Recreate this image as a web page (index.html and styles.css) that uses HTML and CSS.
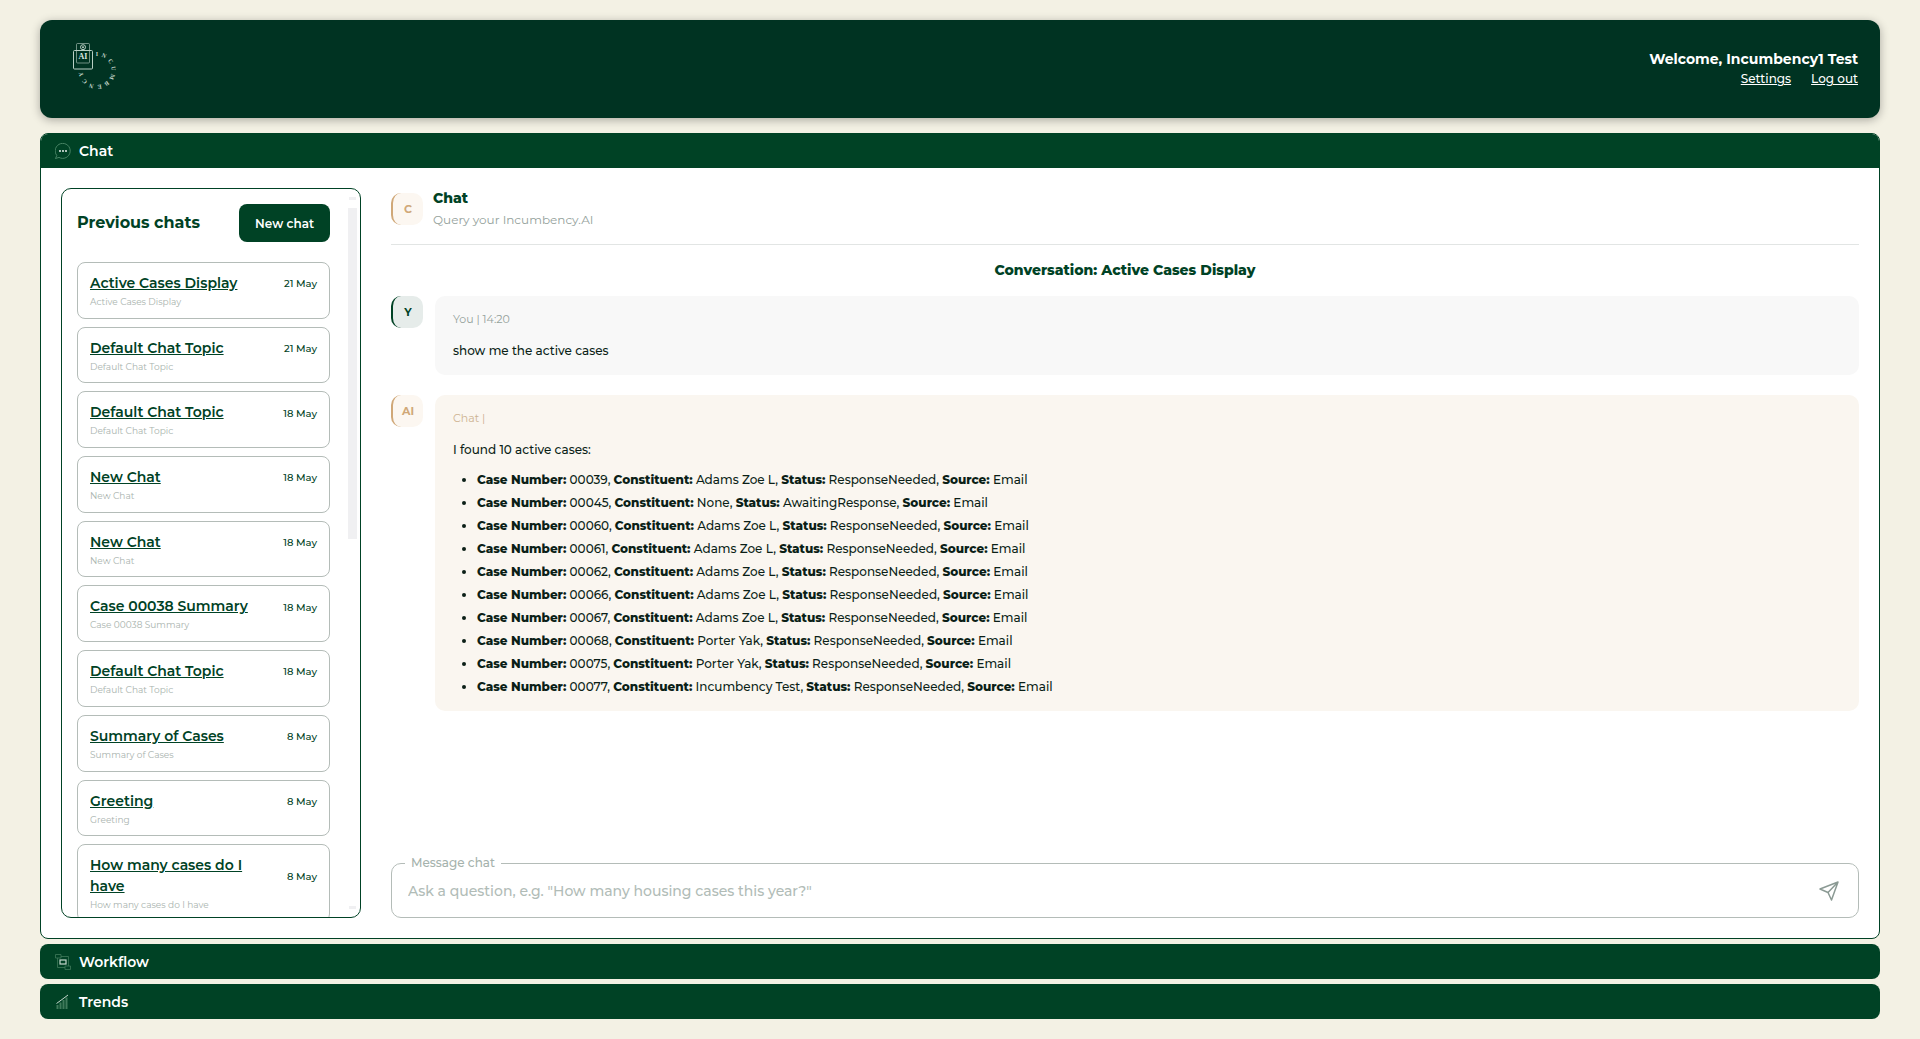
FILE: index.html
```
<!DOCTYPE html>
<html lang="en">
<head>
    <meta charset="UTF-8">
    <meta name="viewport" content="width=device-width, initial-scale=1.0">
    <title>Incumbency.AI</title>
    <link rel="stylesheet" href="styles.css">
</head>
<body>

<header class="header">
    <a href="#" class="logo" aria-label="Incumbency AI">
        <svg width="46" height="52" viewBox="0 0 46 52" fill="none" stroke="#b9cfc4">
            <rect x="4.500" y="0.500" width="13" height="19.500" rx="1" stroke-opacity="0.600"/>
            <circle cx="11" cy="4.200" r="2.500"/>
            <circle cx="11" cy="4.200" r="1" fill="#b9cfc4" stroke="none"/>
            <rect x="1.500" y="7.500" width="19" height="18.500" rx="1"/>
            <text x="11" y="16" class="logo-ai">AI</text>
            <g class="logo-ring">
                <text x="25" y="13" transform="rotate(0 25 27.500)">I</text>
                <text x="25" y="13" transform="rotate(25 25 27.500)">N</text>
                <text x="25" y="13" transform="rotate(56 25 27.500)">C</text>
                <text x="25" y="13" transform="rotate(83 25 27.500)">U</text>
                <text x="25" y="13" transform="rotate(113 25 27.500)">M</text>
                <text x="25" y="13" transform="rotate(143 25 27.500)">B</text>
                <text x="25" y="13" transform="rotate(171 25 27.500)">E</text>
                <text x="25" y="13" transform="rotate(200 25 27.500)">N</text>
                <text x="25" y="13" transform="rotate(229 25 27.500)">C</text>
                <text x="25" y="13" transform="rotate(256 25 27.500)">Y</text>
            </g>
        </svg>
    </a>
    <div class="user">
        <div class="welcome">Welcome, Incumbency1 Test</div>
        <nav class="user-links">
            <a href="#">Settings</a>
            <a href="#">Log out</a>
        </nav>
    </div>
</header>

<main class="sections">

    <!-- Chat -->
    <section class="panel panel-open">
        <button type="button" class="panel-header" aria-expanded="true">
            <svg class="panel-icon" viewBox="0 0 16 16" fill="none">
                <path d="M0.500 15.500 L1.800 12.500 A7.500 7.500 0 1 1 4 14.400 Z" stroke="#4f8a6b" stroke-width="0.900" stroke-linejoin="round"/>
                <g fill="#ffffff"><circle cx="5" cy="8" r="0.900"/><circle cx="8" cy="8" r="0.900"/><circle cx="11" cy="8" r="0.900"/></g>
            </svg>
            Chat
        </button>

        <div class="panel-body">
            <aside class="previous">
                <div class="previous-list">
                    <div class="previous-top">
                        <h2>Previous chats</h2>
                        <button type="button" class="btn">New chat</button>
                    </div>
                    <div class="chat-card">
                        <div><a href="#">Active Cases Display</a><p>Active Cases Display</p></div>
                        <time>21 May</time>
                    </div>
                    <div class="chat-card">
                        <div><a href="#">Default Chat Topic</a><p>Default Chat Topic</p></div>
                        <time>21 May</time>
                    </div>
                    <div class="chat-card">
                        <div><a href="#">Default Chat Topic</a><p>Default Chat Topic</p></div>
                        <time>18 May</time>
                    </div>
                    <div class="chat-card">
                        <div><a href="#">New Chat</a><p>New Chat</p></div>
                        <time>18 May</time>
                    </div>
                    <div class="chat-card">
                        <div><a href="#">New Chat</a><p>New Chat</p></div>
                        <time>18 May</time>
                    </div>
                    <div class="chat-card">
                        <div><a href="#">Case 00038 Summary</a><p>Case 00038 Summary</p></div>
                        <time>18 May</time>
                    </div>
                    <div class="chat-card">
                        <div><a href="#">Default Chat Topic</a><p>Default Chat Topic</p></div>
                        <time>18 May</time>
                    </div>
                    <div class="chat-card">
                        <div><a href="#">Summary of Cases</a><p>Summary of Cases</p></div>
                        <time>8 May</time>
                    </div>
                    <div class="chat-card">
                        <div><a href="#">Greeting</a><p>Greeting</p></div>
                        <time>8 May</time>
                    </div>
                    <div class="chat-card">
                        <div><a href="#">How many cases do I have</a><p>How many cases do I have</p></div>
                        <time>8 May</time>
                    </div>
                </div>
                <div class="scrollbar" aria-hidden="true">
                    <span class="scroll-end"></span>
                    <span class="scroll-track"><span class="scroll-thumb"></span></span>
                    <span class="scroll-end"></span>
                </div>
            </aside>

            <div class="conversation">
                <div class="conversation-top">
                    <span class="avatar avatar-ai">C</span>
                    <div>
                        <h1>Chat</h1>
                        <p>Query your Incumbency.AI</p>
                    </div>
                </div>

                <h3 class="topic">Conversation: Active Cases Display</h3>

                <div class="message">
                    <span class="avatar avatar-user">Y</span>
                    <div class="bubble bubble-user">
                        <div class="meta">You | 14:20</div>
                        <p>show me the active cases</p>
                    </div>
                </div>

                <div class="message">
                    <span class="avatar avatar-ai">AI</span>
                    <div class="bubble bubble-ai">
                        <div class="meta">Chat |</div>
                        <p>I found 10 active cases:</p>
                        <ul>
                            <li><b>Case Number:</b> 00039, <b>Constituent:</b> Adams Zoe L, <b>Status:</b> ResponseNeeded, <b>Source:</b> Email</li>
                            <li><b>Case Number:</b> 00045, <b>Constituent:</b> None, <b>Status:</b> AwaitingResponse, <b>Source:</b> Email</li>
                            <li><b>Case Number:</b> 00060, <b>Constituent:</b> Adams Zoe L, <b>Status:</b> ResponseNeeded, <b>Source:</b> Email</li>
                            <li><b>Case Number:</b> 00061, <b>Constituent:</b> Adams Zoe L, <b>Status:</b> ResponseNeeded, <b>Source:</b> Email</li>
                            <li><b>Case Number:</b> 00062, <b>Constituent:</b> Adams Zoe L, <b>Status:</b> ResponseNeeded, <b>Source:</b> Email</li>
                            <li><b>Case Number:</b> 00066, <b>Constituent:</b> Adams Zoe L, <b>Status:</b> ResponseNeeded, <b>Source:</b> Email</li>
                            <li><b>Case Number:</b> 00067, <b>Constituent:</b> Adams Zoe L, <b>Status:</b> ResponseNeeded, <b>Source:</b> Email</li>
                            <li><b>Case Number:</b> 00068, <b>Constituent:</b> Porter Yak, <b>Status:</b> ResponseNeeded, <b>Source:</b> Email</li>
                            <li><b>Case Number:</b> 00075, <b>Constituent:</b> Porter Yak, <b>Status:</b> ResponseNeeded, <b>Source:</b> Email</li>
                            <li><b>Case Number:</b> 00077, <b>Constituent:</b> Incumbency Test, <b>Status:</b> ResponseNeeded, <b>Source:</b> Email</li>
                        </ul>
                    </div>
                </div>

                <form class="composer">
                    <label for="message">Message chat</label>
                    <input type="text" id="message" name="message" placeholder='Ask a question, e.g. "How many housing cases this year?"'>
                    <button type="button" class="send" aria-label="Send">
                        <svg width="20" height="20" viewBox="0 0 20 20" fill="none" stroke="#8b9a94" stroke-width="1.500" stroke-linejoin="round">
                            <path d="M1 8 L19 1 L12.500 19 L9 11.500 Z M9 11.500 L19 1"/>
                        </svg>
                    </button>
                </form>
            </div>
        </div>
    </section>

    <!-- Workflow -->
    <section class="panel">
        <button type="button" class="panel-header" aria-expanded="false">
            <svg class="panel-icon" viewBox="0 0 16 16" fill="none" stroke="#3f7a5b" stroke-width="0.800">
                <path d="M0.500 0.500 H6 V4 H0.500 Z M10 12 H15.500 V15.500 H10 Z M6 2.500 H13.500 V12 M2.500 4 V13.500 H10"/>
                <rect x="5" y="6" width="6" height="4" stroke="#c5d8cd" stroke-width="1.200"/>
            </svg>
            Workflow
        </button>
    </section>

    <!-- Trends -->
    <section class="panel">
        <button type="button" class="panel-header" aria-expanded="false">
            <svg class="panel-icon" viewBox="0 0 16 16" fill="none">
                <path d="M2.500 15 V11 M5.500 15 V8.500 M8.500 15 V6 M11.500 15 V3.500" stroke="#3f7a5b" stroke-width="2"/>
                <path d="M1.500 9.500 L7 5.500 L13 1" stroke="#c5d8cd"/>
            </svg>
            Trends
        </button>
    </section>
</main>

</body>
</html>
```
FILE: styles.css
```
/* Basic Reset */
* {
    box-sizing: border-box;
    margin: 0;
    padding: 0;
}

body {
    display: flex;
    flex-direction: column;
    gap: 15px;
    min-height: 100vh;
    padding: 20px 40px;
    background-color: #f3f1e4;
    color: #0b1f17;
    font-family: Montserrat, Inter, sans-serif;
    font-size: 12px;
    line-height: 20px;
}

button,
input {
    font-family: inherit;
}

/* Header */
.header {
    display: flex;
    justify-content: space-between;
    align-items: center;
    height: 98px;
    padding: 0 22px 0 32px;
    border-radius: 12px;
    background-color: #003322;
    box-shadow: 0 2px 10px rgba(0, 0, 0, 0.3);
    color: #fff;
}

.logo-ai {
    fill: #dbe7e0;
    stroke: none;
    font: bold 8px "Liberation Serif", serif;
    text-anchor: middle;
}

.logo-ring {
    fill: #c5d8cd;
    stroke: none;
    font: bold 6px "Liberation Serif", serif;
    text-anchor: middle;
}

.logo svg {
    display: block;
}

.user {
    text-align: right;
}

.welcome {
    font-size: 14px;
    font-weight: 700;
}

.user-links {
    display: flex;
    justify-content: flex-end;
    gap: 20px;
}

.user-links a {
    color: #fff;
    font-weight: 500;
}

/* Accordion panels */
.sections {
    display: flex;
    flex: 1;
    flex-direction: column;
    gap: 5px;
}

.panel {
    border-radius: 8px;
    background-color: #004225;
    overflow: hidden;
}

.panel-open {
    display: flex;
    flex: 1;
    flex-direction: column;
    border: 1px solid #004225;
    background-color: #fff;
}

.panel-header {
    display: flex;
    align-items: center;
    gap: 8px;
    width: 100%;
    height: 35px;
    padding: 0 15px;
    border: none;
    background-color: #004225;
    color: #fff;
    font-size: 14px;
    font-weight: 600;
    cursor: pointer;
}

.panel-open .panel-header {
    height: 34px;
    padding: 0 14px;
}

.panel-icon {
    width: 16px;
    height: 16px;
}

.panel-body {
    display: flex;
    flex: 1;
    gap: 30px;
    padding: 20px;
}

/* Previous chats */
.previous {
    display: flex;
    width: 300px;
    border: 1px solid #004225;
    border-radius: 10px;
    overflow: hidden;
}

.previous-list {
    display: flex;
    flex: 1 1 0;
    flex-direction: column;
    gap: 8px;
    height: 0;
    min-height: 100%;
    padding: 15px 15px 0 15px;
    overflow: hidden;
}

.previous-top {
    display: flex;
    flex-shrink: 0;
    justify-content: space-between;
    align-items: center;
    margin-bottom: 12px;
}

.previous-top h2 {
    color: #004225;
    font-size: 16px;
    font-weight: 700;
}

.btn {
    height: 38px;
    padding: 0 16px;
    border: none;
    border-radius: 8px;
    background-color: #004225;
    color: #fff;
    font-size: 12px;
    font-weight: 600;
    cursor: pointer;
}

.chat-card {
    display: flex;
    flex-shrink: 0;
    justify-content: space-between;
    align-items: center;
    gap: 12px;
    padding: 10px 12px;
    border: 1px solid #b4bcb8;
    border-radius: 8px;
    color: #004225;
}

.chat-card a {
    color: #004225;
    font-size: 14px;
    font-weight: 600;
    line-height: 21px;
}

.chat-card p {
    margin-top: 2px;
    color: #a9b3ae;
    font-size: 9px;
    line-height: 1.3;
}

.chat-card time {
    flex-shrink: 0;
    margin-bottom: 12px;
    font-size: 10px;
    font-weight: 500;
    line-height: 16px;
}

.scrollbar {
    display: flex;
    flex-direction: column;
    align-items: center;
    gap: 8px;
    width: 15px;
    padding: 8px 3px;
}

.scroll-end {
    width: 7px;
    height: 3px;
    background-color: #f0f0f2;
}

.scroll-track {
    flex: 1;
    width: 9px;
}

.scroll-thumb {
    display: block;
    height: 48%;
    background-color: #f0f0f2;
}

/* Conversation */
.conversation {
    display: flex;
    flex: 1;
    flex-direction: column;
}

.conversation-top {
    display: flex;
    align-items: center;
    gap: 10px;
    padding-bottom: 14px;
    border-bottom: 1px solid #e2e5e4;
}

.conversation-top h1 {
    color: #004225;
    font-size: 14px;
    font-weight: 800;
}

.conversation-top p {
    margin-top: 2px;
    color: #94a19b;
}

.avatar {
    flex-shrink: 0;
    width: 32px;
    height: 32px;
    border-left: 2px solid;
    border-radius: 10px;
    font-size: 11px;
    font-weight: 700;
    line-height: 32px;
    text-align: center;
}

.avatar-ai {
    background-color: #fcf7f1;
    color: #d0a878;
}

.avatar-user {
    background-color: #e6ecea;
    color: #004225;
}

.topic {
    margin: 15px 0 16px;
    color: #004225;
    font-size: 14px;
    font-weight: 800;
    text-align: center;
}

.message {
    display: flex;
    gap: 12px;
    margin-bottom: 20px;
}

.bubble {
    flex: 1;
    padding: 13px 18px 14px;
    border-radius: 10px;
    font-weight: 500;
}

.bubble-user {
    background-color: #f8f8f8;
}

.bubble-ai {
    background-color: #faf6f0;
}

.bubble b {
    font-weight: 800;
}

.meta {
    margin-bottom: 12px;
    color: #94a19b;
    font-size: 11px;
    font-weight: 400;
}

.bubble-ai .meta {
    color: #cdb391;
}

.bubble ul {
    margin-top: 10px;
    padding-left: 24px;
}

.bubble li {
    margin-bottom: 3px;
}

.bubble li:last-child {
    margin-bottom: 0;
}

/* Message box */
.composer {
    display: flex;
    position: relative;
    align-items: center;
    height: 55px;
    margin-top: auto;
    padding: 0 19px 0 16px;
    border: 1px solid #b4bcb8;
    border-radius: 10px;
}

.composer label {
    position: absolute;
    top: -11px;
    left: 13px;
    padding: 0 6px;
    background-color: #fff;
    color: #a5b2ac;
    font-weight: 500;
}

.composer input {
    flex: 1;
    border: none;
    outline: none;
    background: none;
    color: #0b1f17;
    font-size: 14px;
    font-weight: 500;
}

.composer input::placeholder {
    color: #b1bcb7;
}

.send {
    border: none;
    background: none;
    cursor: pointer;
}

.send svg {
    display: block;
}
```
